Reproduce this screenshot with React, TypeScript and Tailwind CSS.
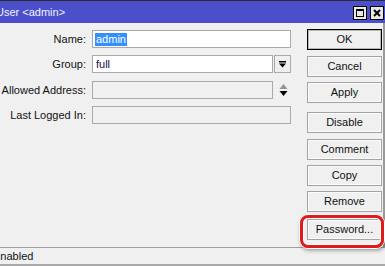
import React from "react";

const font = { fontFamily: '"Liberation Sans", Arial, sans-serif' };

function Btn({ label, primary, className = "" }: { label: string; primary?: boolean; className?: string }) {
  return (
    <div
      className={
        "h-[21px] w-[75px] flex items-center justify-center text-[11px] text-[#111] bg-[#f0f0f0] " +
        (primary ? "border border-black shadow-[inset_0_0_0_1px_#b8b8b8]" : "border border-[#a3a3a3] shadow-[inset_0_0_0_1px_#fbfbfb]") +
        " " +
        className
      }
    >
      {label}
    </div>
  );
}

function Label({ text }: { text: string }) {
  return <div className="w-[86px] text-right text-[11px] text-[#111] leading-none pr-0">{text}</div>;
}

export default function App() {
  return (
    <div style={font} className="w-[385px] h-[266px] overflow-hidden bg-[#f0f0f0] flex flex-col relative">
      <div className="h-px bg-[#2a2a2a]" />
      <div className="h-[22px] bg-[#4b50ca] flex items-center justify-between">
        <span className="ml-[-4px] text-[11px] text-[#f2f2ff] mt-[1px]">User &lt;admin&gt;</span>
        <div className="flex gap-[3px] mr-[1px] mt-[2px]">
          <div className="w-[14px] h-[14px] bg-[#e8e8e8] border border-black flex items-center justify-center">
            <div className="w-[8px] h-[8px] border border-black border-t-2" />
          </div>
          <div className="w-[14px] h-[14px] bg-[#e8e8e8] border border-black flex items-center justify-center">
            <svg width="8" height="8" viewBox="0 0 8 8">
              <path d="M1 1 L7 7 M7 1 L1 7" stroke="black" strokeWidth="2" />
            </svg>
          </div>
        </div>
      </div>
      <div className="flex-1 flex border-r-2 border-[#9a9a9a]">
        <div className="flex flex-col pt-[7px] w-[291px]">
          <div className="flex items-center h-[18px]">
            <Label text="Name:" />
            <div className="ml-[6px] w-[199px] h-[18px] bg-white border border-[#a9a9a9] flex items-center pl-[2px]">
              <span className="bg-[#3390ff] text-white text-[11px] leading-[13px] px-[1px]">admin</span>
            </div>
          </div>
          <div className="flex items-center h-[18px] mt-[7px]">
            <Label text="Group:" />
            <div className="ml-[6px] w-[181px] h-[18px] bg-white border border-[#a9a9a9] flex items-center pl-[3px] text-[11px] text-[#10104a]">
              full
            </div>
            <div className="ml-[1px] w-[17px] h-[18px] border border-[#a9a9a9] bg-[#f0f0f0] flex items-center justify-center">
              <svg width="9" height="9" viewBox="0 0 9 9">
                <rect x="1" y="1" width="7" height="1.5" fill="black" />
                <path d="M1 3.5 H8 L4.5 7.5 Z" fill="black" />
              </svg>
            </div>
          </div>
          <div className="flex items-center h-[18px] mt-[8px]">
            <Label text="Allowed Address:" />
            <div className="ml-[6px] w-[181px] h-[18px] bg-[#f0f0f0] border border-[#a9a9a9]" />
            <div className="ml-[5px] w-[10px] flex justify-center">
              <svg width="9" height="14" viewBox="0 0 9 14">
                <path d="M4.5 1 L8.5 6 H0.5 Z" fill="#8c9a8c" />
                <path d="M0.5 8 H8.5 L4.5 13 Z" fill="black" />
              </svg>
            </div>
          </div>
          <div className="flex items-center h-[18px] mt-[7px]">
            <Label text="Last Logged In:" />
            <div className="ml-[6px] w-[199px] h-[18px] bg-[#f0f0f0] border border-[#a9a9a9]" />
          </div>
        </div>
        <div className="ml-[16px] flex flex-col pt-[6px]">
          <Btn label="OK" primary />
          <Btn label="Cancel" className="mt-[6px]" />
          <Btn label="Apply" className="mt-[5px]" />
          <Btn label="Disable" className="mt-[9px]" />
          <Btn label="Comment" className="mt-[6px]" />
          <Btn label="Copy" className="mt-[5px]" />
          <Btn label="Remove" className="mt-[5px]" />
          <Btn label="Password..." className="mt-[7px]" />
        </div>
      </div>
      <div className="h-px bg-[#a0a0a0]" />
      <div className="h-[16px] bg-[#f0f0f0] flex items-center">
        <span className="ml-[-7px] text-[11px] text-[#111]">Enabled</span>
      </div>
      <div className="h-[2px] bg-[#a8a8a8]" />
      <div className="absolute left-[300px] top-[215px] w-[84px] h-[33px] rounded-[8px] border-[3px] border-[#e01b1b] shadow-[0_0_0_1px_#ffffff,1px_2px_4px_rgba(0,0,0,0.45),inset_0_0_0_1px_#ffffff]" />
    </div>
  );
}
